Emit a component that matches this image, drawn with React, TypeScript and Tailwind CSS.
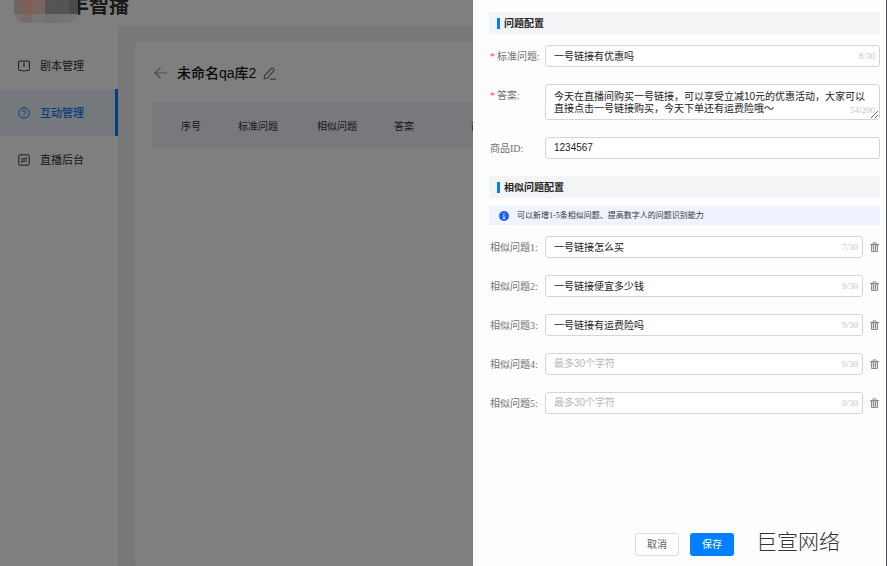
import { useState } from "react";

const menus = [
  { title: "剧本管理", icon: "book", active: false },
  { title: "互动管理", icon: "help", active: true },
  { title: "直播后台", icon: "panel", active: false },
];

const columns = [
  { title: "序号", width: "w-[57px]" },
  { title: "标准问题", width: "w-[79px]" },
  { title: "相似问题", width: "w-[77px]" },
  { title: "答案", width: "w-[77px]" },
  { title: "商品ID", width: "" },
];

const initialSimilar = ["一号链接怎么买", "一号链接便宜多少钱", "一号链接有运费险吗", "", ""];
const similarCounts = [7, 9, 9, 0, 0];

const labelClass =
  "h-[22px] w-14 shrink-0 whitespace-nowrap pt-px pl-px text-[10px] leading-[22px] text-[#707276] font-['Liberation_Serif','Noto_Sans_CJK_SC',serif]";
const inputClass =
  "block h-[22px] w-full rounded-[3px] border border-[#d4d5d8] bg-white px-2 pb-px text-[10px] text-[#222] outline-none placeholder:text-[#b4b6ba]";
const countClass =
  "pointer-events-none absolute right-[5px] text-[9px] leading-3 text-[#c3c5c9] font-['Liberation_Serif',serif]";

function MenuIcon({ name }: { name: string }) {
  return (
    <svg viewBox="0 0 12 12" className="h-3 w-3 shrink-0" fill="none" stroke="currentColor" strokeWidth="1">
      {name === "book" && (
        <path d="M4.500 10.500H1.500a.9.9 0 0 1-.9-.9V2a.9.9 0 0 1 .9-.9h9a.9.9 0 0 1 .9.9v7.600a.9.9 0 0 1-.9.9H7.500L6 11.400l-1.500-.9M6 2.500v4.500" />
      )}
      {name === "help" && (
        <>
          <circle cx="6" cy="6" r="5.2" />
          <path d="M4.500 4.900a1.500 1.500 0 1 1 2.200 1.300c-.5.3-.7.5-.7 1.100M6 8.100v1" />
        </>
      )}
      {name === "panel" && (
        <>
          <rect x="0.8" y="0.8" width="10.4" height="10.4" rx="1.4" />
          <path d="M3 4.900h6L7.300 3.500M9 7.100H3l1.700 1.400" />
        </>
      )}
    </svg>
  );
}

function TrashIcon() {
  return (
    <svg viewBox="0 0 9 10" className="h-[10px] w-[9px]" fill="none" stroke="currentColor" strokeWidth="1">
      <path d="M1.500 3h6v6.500h-6z" fill="currentColor" fillOpacity="0.25" />
      <path d="M0 2.500h9M3 2.300V.9h3v1.400M3.500 4v4.500M5.500 4v4.500" />
    </svg>
  );
}

function SectionTitle({ children }: { children: string }) {
  return (
    <h2 className="flex h-[22px] items-center bg-[#f3f4f6] pl-2 text-[10px] font-bold text-[#222]">
      <span className="mr-1 h-[11px] w-[3px] bg-[#0080ff]" />
      {children}
    </h2>
  );
}

export default function App() {
  const [question, setQuestion] = useState("一号链接有优惠吗");
  const [answer, setAnswer] = useState(
    "今天在直播间购买一号链接，可以享受立减10元的优惠活动，大家可以直接点击一号链接购买，今天下单还有运费险哦～"
  );
  const [goodsId, setGoodsId] = useState("1234567");
  const [similar, setSimilar] = useState(initialSimilar);

  const updateSimilar = (index: number, value: string) => {
    setSimilar(similar.map((item, i) => (i === index ? value : item)));
  };

  return (
    <div className="relative flex min-h-screen flex-col overflow-hidden bg-white font-['Liberation_Sans','Noto_Sans_CJK_SC',sans-serif] text-[#333]">
      <header className="flex h-[26px] shrink-0 items-start pl-[14px]">
        <div className="z-0 grid h-[23px] w-16 shrink-0 grid-cols-[7px_11px_13px_12px_12px_9px] grid-rows-[14px_9px] overflow-hidden rounded-b-xl">
          <span className="bg-[#e0c8c2]" />
          <span className="bg-[#ffbfaa]" />
          <span className="bg-[#f2cabf]" />
          <span className="bg-[#aaaaaa]" />
          <span className="bg-[#a8a8a8]" />
          <span className="bg-[#949494]" />
          <span className="bg-[#f2e8e6]" />
          <span className="bg-[#efd8d2]" />
          <span className="bg-[#f2eae8]" />
          <span className="bg-[#e4e4e2]" />
          <span className="bg-[#ebebe9]" />
          <span className="bg-[#ececec]" />
        </div>
        <span className="-ml-[9px] text-[20px] leading-3 font-bold">丰智播</span>
      </header>

      <div className="flex grow">
        <nav className="w-[118px] shrink-0 pt-4">
          {menus.map((menu) => (
            <a
              key={menu.title}
              href="#"
              className={
                menu.active
                  ? "flex h-[47px] items-center gap-[10px] border-r-[3px] border-[#0080ff] bg-[#eaf0f8] pl-[18px] text-[11px] font-medium text-[#1677ff]"
                  : "flex h-[47px] items-center gap-[10px] pl-[18px] text-[11px] text-[#333]"
              }
            >
              <MenuIcon name={menu.icon} />
              <span className="pt-[2px]">{menu.title}</span>
            </a>
          ))}
        </nav>

        <main className="grow bg-[#f1f1f1] pt-4 pl-[17px]">
          <div className="h-full rounded-sm bg-white pt-5 pl-[17px]">
            <div className="flex h-[22px] items-center">
              <button type="button" aria-label="返回" className="mr-[10px] text-[#999]">
                <svg viewBox="0 0 15 12" className="h-3 w-[15px]" fill="none" stroke="currentColor" strokeWidth="1.2">
                  <path d="M15 6H3M8.500.8 3 6l5.500 5.200" />
                </svg>
              </button>
              <h1 className="text-[14px] font-medium text-[#111]">未命名qa库2</h1>
              <button type="button" aria-label="编辑" className="ml-[7px] text-[#777]">
                <svg viewBox="0 0 13 13" className="h-[13px] w-[13px]" fill="none" stroke="currentColor" strokeWidth="1.2">
                  <path d="M1.200 11.800 1.600 8.600 8.300 1.500a1.300 1.300 0 0 1 1.900 0l.5.5a1.300 1.300 0 0 1 0 1.900L4 11.300ZM7 12.200h6" />
                </svg>
              </button>
            </div>
            <table className="mt-[18px] w-full table-fixed">
              <thead>
                <tr className="h-[45px] bg-[#f0f3f8]">
                  {columns.map((column) => (
                    <th
                      key={column.title}
                      className={`${column.width} pt-1 pl-[29px] text-left text-[10px] font-normal whitespace-nowrap`}
                    >
                      {column.title}
                    </th>
                  ))}
                </tr>
              </thead>
            </table>
          </div>
        </main>
      </div>

      <div className="absolute inset-0 bg-black/50" />

      <form
        className="absolute inset-y-0 right-0 flex w-[414px] flex-col border-r border-[#50535c] bg-[#fdfdfd] pt-3 pr-[6px] pl-4"
        onSubmit={(e) => e.preventDefault()}
      >
        <SectionTitle>问题配置</SectionTitle>

        <div className="mt-[11px] mb-[17px] flex flex-col gap-[17px]">
          <div className="flex">
            <label htmlFor="question" className={labelClass}>
              <span className="mr-[2px] text-[#ff4d4f]">*</span>标准问题:
            </label>
            <div className="relative grow">
              <input
                id="question"
                className={inputClass}
                value={question}
                onChange={(e) => setQuestion(e.target.value)}
              />
              <span className={`${countClass} top-[5px]`}>8/30</span>
            </div>
          </div>

          <div className="flex">
            <label htmlFor="answer" className={labelClass}>
              <span className="mr-[2px] text-[#ff4d4f]">*</span>答案:
            </label>
            <div className="relative grow">
              <textarea
                id="answer"
                className="block h-9 w-full resize-y overflow-hidden rounded-[3px] border border-[#d4d5d8] bg-white px-2 py-[6px] text-[10px] leading-3 text-[#222] outline-none"
                value={answer}
                onChange={(e) => setAnswer(e.target.value)}
              />
              <span className={`${countClass} bottom-1`}>54/200</span>
            </div>
          </div>

          <div className="flex">
            <label htmlFor="goods" className={labelClass}>
              商品ID:
            </label>
            <input
              id="goods"
              className={inputClass}
              value={goodsId}
              onChange={(e) => setGoodsId(e.target.value)}
            />
          </div>
        </div>

        <SectionTitle>相似问题配置</SectionTitle>

        <p className="mt-2 mb-[11px] flex h-[19px] items-center gap-2 bg-[#eff3fe] pl-[10px] font-['Liberation_Serif','Noto_Sans_CJK_SC',serif] text-[8px] text-[#333]">
          <svg viewBox="0 0 10 10" className="h-[10px] w-[10px]">
            <circle cx="5" cy="5" r="5" fill="#1f63ef" />
            <path d="M5 2v1.200M4.200 4.500H5v3M4 7.500h2" stroke="#fff" strokeWidth="1" fill="none" />
          </svg>
          可以新增1-5条相似问题、提高数字人的问题识别能力
        </p>

        <div className="flex flex-col gap-[17px]">
          {similar.map((item, index) => (
            <div key={index} className="flex h-[22px] items-center">
              <label htmlFor={`similar-${index}`} className={labelClass}>
                相似问题{index + 1}:
              </label>
              <div className="relative grow">
                <input
                  id={`similar-${index}`}
                  className={inputClass}
                  placeholder="最多30个字符"
                  value={item}
                  onChange={(e) => updateSimilar(index, e.target.value)}
                />
                <span className={`${countClass} top-[5px]`}>{similarCounts[index]}/30</span>
              </div>
              <button type="button" aria-label="删除" className="ml-[7px] pr-px text-[#8a8c90]">
                <TrashIcon />
              </button>
            </div>
          ))}
        </div>

        <div className="mt-auto mb-[6px] flex items-center justify-end pr-10">
          <button
            type="button"
            className="h-[23px] w-11 rounded-[3px] border border-[#dcdde0] bg-white text-[10px] text-[#606266]"
          >
            取消
          </button>
          <button type="submit" className="ml-[11px] h-[23px] w-11 rounded-[3px] bg-[#0080ff] text-[10px] text-white">
            保存
          </button>
          <span className="ml-[22px] pb-1 text-[21px] leading-7 font-light text-[#333]">巨宣网络</span>
        </div>
      </form>
    </div>
  );
}
